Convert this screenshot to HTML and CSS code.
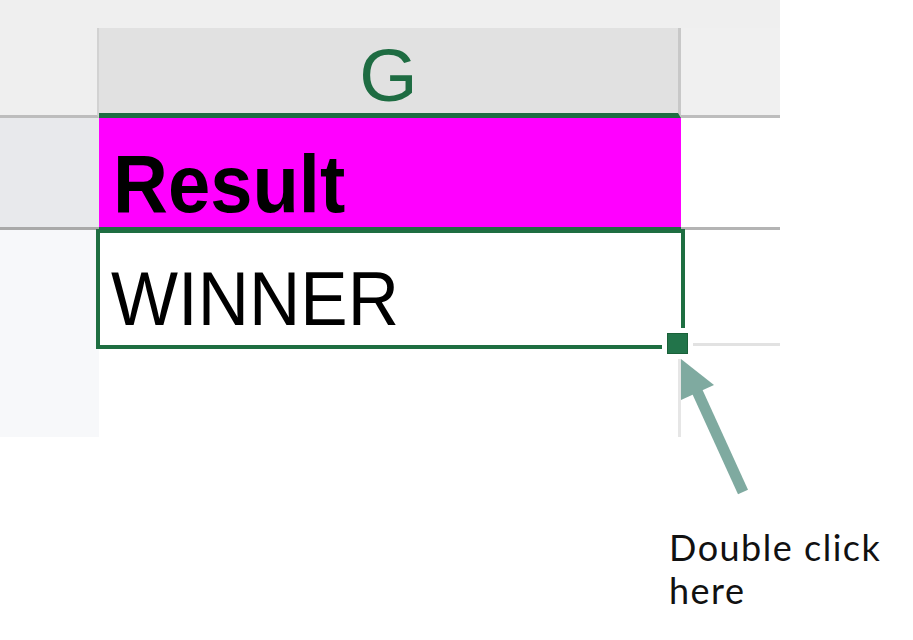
FILE: index.html
```html
<!DOCTYPE html>
<html lang="en">
<head>
<meta charset="utf-8">
<title>Fill handle</title>
<link rel="stylesheet" href="styles.css">
</head>
<body>
<div class="sheet">
  <div class="topband"></div>

  <div class="corner"></div>
  <div class="colhead"><span class="colletter">G</span></div>
  <div class="colhead-rest"></div>

  <div class="rowhead rowhead-1"></div>
  <div class="cell cell-result"><span class="txt txt-bold">Result</span></div>
  <div class="cell cell-right1"></div>

  <div class="rowhead rowhead-2"></div>
  <div class="cell cell-selected"><span class="txt txt-regular">WINNER</span><div class="fill-handle"></div></div>
  <div class="cell cell-right2"></div>

  <div class="rowhead rowhead-3"></div>
  <div class="cell cell-g3"></div>
  <div class="cell cell-right3"></div>
</div>

<p class="caption">Double click<br>here</p>

<svg class="arrow" width="913" height="640" viewBox="0 0 913 640" aria-hidden="true">
  <line x1="697" y1="391" x2="743" y2="492" stroke="#7faaa0" stroke-width="11"/>
  <polygon points="681,359 681,400 714,385" fill="#7faaa0"/>
</svg>
</body>
</html>
```

FILE: styles.css
```css
html, body {
  margin: 0;
  padding: 0;
}

body {
  width: 913px;
  height: 640px;
  background: #ffffff;
  position: relative;
  overflow: hidden;
  font-family: "Liberation Sans", Arial, sans-serif;
}

.sheet {
  width: 780px;
  display: grid;
  grid-template-columns: 99px 582px 99px;
  grid-template-rows: 28px 90px 112px 117px 90px;
}

.sheet > div {
  box-sizing: border-box;
}

.topband {
  grid-column: 1 / 4;
  background: #efefef;
}

.corner {
  background: #efefef;
  border-bottom: 3px solid #bdbdbd;
  border-right: 2px solid #d2d2d2;
}

.colhead {
  background: #e1e1e1;
  border-right: 3px solid #c8c8c8;
  border-bottom: 5px solid #1f6e43;
  display: flex;
  justify-content: center;
  padding-top: 10px;
}

.colletter {
  font-size: 75px;
  line-height: 75px;
  height: 75px;
  color: #1e6c42;
}

.colhead-rest {
  background: #f0f0f0;
  border-bottom: 3px solid #bdbdbd;
}

.rowhead-1 {
  background: #e8e9ec;
  border-bottom: 3px solid #a9a9a9;
}

.rowhead-2,
.rowhead-3 {
  background: #f7f8fa;
  width: 101px;
}

.cell-result {
  background: #ff00ff;
  border-bottom: 3px solid #1f6e43;
  padding: 30px 0 0 14px;
}

.cell-right1 {
  background: #ffffff;
  border-bottom: 3px solid #b4b4b4;
}

.cell-selected {
  position: relative;
  background: #ffffff;
  border: 4px solid #1e6e41;
  margin: -1px -4px -2px -3px;
  padding: 32px 0 0 11px;
  z-index: 1;
}

.cell-right2 {
  background: #ffffff;
  border-bottom: 3px solid #e2e2e2;
  margin-bottom: 1px;
}

.cell-g3 {
  background: #ffffff;
  border-right: 3px solid #e6e6e6;
}

.cell-right3 {
  background: #ffffff;
}

.txt {
  display: block;
  color: #000000;
  white-space: nowrap;
}

.txt-bold {
  font-weight: bold;
  font-size: 76px;
  line-height: 76px;
  height: 76px;
  transform: scaleY(1.08);
  transform-origin: 0 64px;
}

.txt-regular {
  font-size: 71px;
  line-height: 71px;
  height: 71px;
  transform: scaleY(1.07);
  transform-origin: 0 60px;
}

.fill-handle {
  position: absolute;
  right: -12px;
  bottom: -14px;
  width: 21px;
  height: 21px;
  background: #22744a;
  border: 5px solid #ffffff;
  box-shadow: inset 0 0 0 1px #1a6139;
}

.caption {
  margin: 89px 0 0 669px;
  font-family: Lato, "Noto Sans", sans-serif;
  font-size: 36px;
  line-height: 43px;
  letter-spacing: 1.5px;
  color: #111111;
}

.arrow {
  position: absolute;
  left: 0;
  top: 0;
  pointer-events: none;
}
```
